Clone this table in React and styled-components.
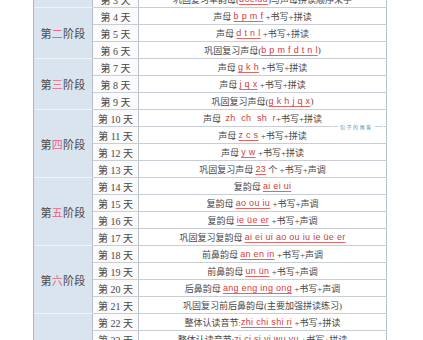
import React from 'react';
import styled, { createGlobalStyle } from 'styled-components';

const Global = createGlobalStyle`
  html, body { margin: 0; padding: 0; background: #ffffff; overflow: hidden; }
  body { font-family: "Liberation Serif", "Noto Sans CJK SC", serif; }
`;

const Page = styled.div`
  position: relative;
  width: 423px;
  height: 340px;
  overflow: hidden;
  background: #ffffff;
`;

const Table = styled.div`
  display: grid;
  grid-template-columns: 59px 46px 248px;
  grid-auto-rows: 17px;
  margin-top: -43px;
  margin-left: 33px;
  width: max-content;
  border-left: 1px solid #a9b6c6;
`;

const StageCell = styled.div`
  grid-row: span ${(p) => p.$span};
  display: flex;
  align-items: center;
  justify-content: center;
  background: #dae4ef;
  border-right: 1px solid #b4bfcc;
  border-bottom: 1px solid #eef3f8;
  box-sizing: border-box;
  font-size: 11px;
  color: #4a4a4a;
  letter-spacing: 0.3px;
`;

const Num = styled.span`
  color: #e06a86;
`;

const DayCell = styled.div`
  display: flex;
  align-items: center;
  justify-content: center;
  background: #fbfbfb;
  border-right: 1px solid #b9c1cb;
  border-bottom: 1px solid #c9ced6;
  box-sizing: border-box;
  font-size: 10px;
  color: #474747;
  white-space: pre;
`;

const ContentCell = styled.div`
  display: flex;
  align-items: center;
  justify-content: center;
  background: #ffffff;
  border-right: 1px solid #b9c1cb;
  border-bottom: 1px solid #c9ced6;
  box-sizing: border-box;
  font-size: 9px;
  color: #474747;
  white-space: pre;
`;

const Py = styled.span`
  font-family: "Liberation Sans", sans-serif;
  color: #cf3d3d;
  letter-spacing: 0.3px;
  text-decoration: ${(p) => (p.$plain ? 'none' : 'underline')};
  text-decoration-color: #d86a6a;
  text-underline-offset: 1.5px;
`;

const Mark = styled.div`
  position: absolute;
  left: 332px;
  top: 123px;
  display: flex;
  align-items: center;
  gap: 2px;
  background: #ffffff;
  padding: 0 1px;
  font-family: "Noto Sans CJK SC", sans-serif;
  font-size: 5px;
  color: #3a8fd6;
  letter-spacing: 1.5px;
`;

const MarkLine = styled.span`
  display: block;
  width: ${(p) => p.$w}px;
  height: 1px;
  background: #c9ced6;
`;

const stages = [
  {
    n: '一',
    rows: [
      [1, ['单韵母 ', { p: 'ɑ o e' }, ' +书写+声调']],
      [2, ['单韵母 ', { p: 'i u ü' }, ' +书写+声调']],
      [3, ['巩固复习单韵母(', { p: 'ɑoeiuü' }, ')与声母拼读顺序来学']],
    ],
  },
  {
    n: '二',
    rows: [
      [4, ['声母 ', { p: 'b p m f' }, ' +书写+拼读']],
      [5, ['声母 ', { p: 'd t n l' }, ' +书写+拼读']],
      [6, ['巩固复习声母(', { p: 'b p m f d t n l' }, ')']],
    ],
  },
  {
    n: '三',
    rows: [
      [7, ['声母 ', { p: 'g k h' }, ' +书写+拼读']],
      [8, ['声母 ', { p: 'j q x' }, ' +书写+拼读']],
      [9, ['巩固复习声母(', { p: 'g k h j q x' }, ')']],
    ],
  },
  {
    n: '四',
    rows: [
      [10, ['声母  ', { p: 'zh  ch  sh  r', plain: true }, '+书写+拼读']],
      [11, ['声母 ', { p: 'z c s' }, ' +书写+拼读']],
      [12, ['声母 ', { p: 'y w' }, ' +书写+拼读']],
      [13, ['巩固复习声母 ', { p: '23' }, ' 个 +书写+声调']],
    ],
  },
  {
    n: '五',
    rows: [
      [14, ['复韵母 ', { p: 'ai ei ui' }]],
      [15, ['复韵母 ', { p: 'ao ou iu' }, ' +书写+声调']],
      [16, ['复韵母 ', { p: 'ie üe er' }, ' +书写+声调']],
      [17, ['巩固复习复韵母 ', { p: 'ai ei ui ao ou iu ie üe er' }]],
    ],
  },
  {
    n: '六',
    rows: [
      [18, ['前鼻韵母 ', { p: 'an en in' }, ' +书写+声调']],
      [19, ['前鼻韵母 ', { p: 'un ün' }, ' +书写+声调']],
      [20, ['后鼻韵母 ', { p: 'ang eng ing ong' }, ' +书写+声调']],
      [21, ['巩固复习前后鼻韵母(主要加强拼读练习)']],
    ],
  },
  {
    n: '七',
    rows: [
      [22, ['整体认读音节:', { p: 'zhi chi shi ri' }, ' +书写+拼读']],
      [23, ['整体认读音节:', { p: 'zi ci si yi wu yu' }, ' +书写+拼读']],
      [24, ['整体认读音节:', { p: 'ye yue yuan' }, ' +书写+拼读']],
      [25, ['整体认读音节:', { p: 'yin yun ying' }, ' +书写+拼读']],
    ],
  },
];

function Content({ parts }) {
  return parts.map((part, i) =>
    typeof part === 'string' ? (
      <span key={i}>{part}</span>
    ) : (
      <Py key={i} $plain={part.plain}>
        {part.p}
      </Py>
    )
  );
}

export default function App() {
  return (
    <Page>
      <Global />
      <Table>
        {stages.map((s) => (
          <React.Fragment key={s.n}>
            <StageCell $span={s.rows.length}>
              <span>
                第<Num>{s.n}</Num>阶段
              </span>
            </StageCell>
            {s.rows.map(([d, parts]) => (
              <React.Fragment key={d}>
                <DayCell>{`第 ${d} 天`}</DayCell>
                <ContentCell>
                  <Content parts={parts} />
                </ContentCell>
              </React.Fragment>
            ))}
          </React.Fragment>
        ))}
      </Table>
      <Mark>
        <MarkLine $w={5} />
        <span>包子的博客</span>
        <MarkLine $w={8} />
      </Mark>
    </Page>
  );
}
